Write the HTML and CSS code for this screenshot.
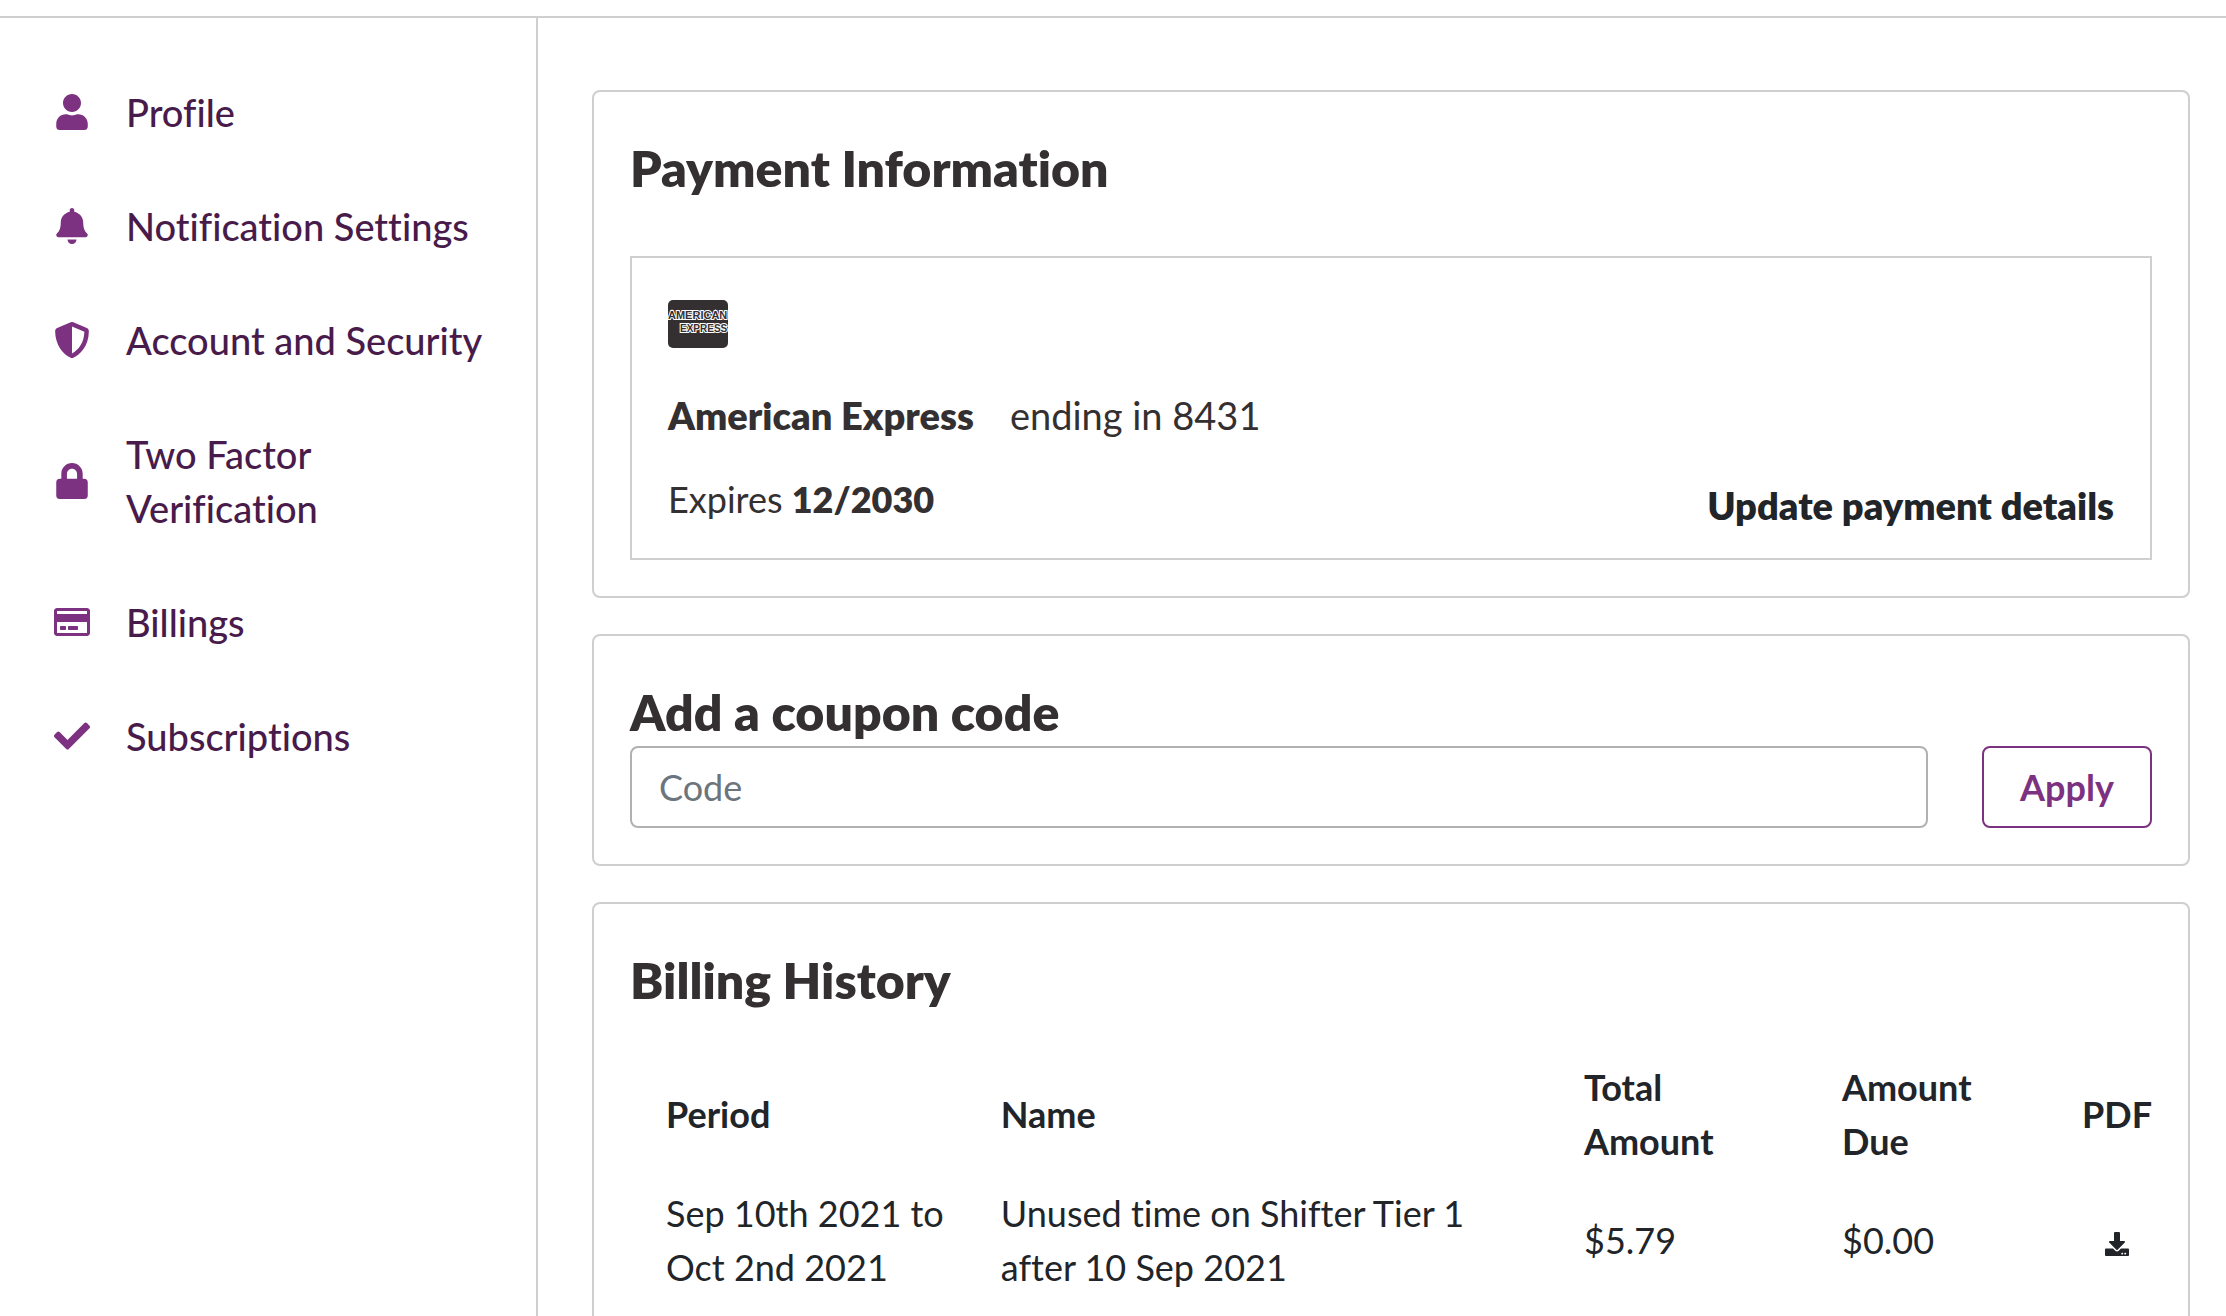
FILE: index.html
```html
<!DOCTYPE html>
<html lang="en">
<head>
<meta charset="utf-8">
<meta name="viewport" content="width=device-width, initial-scale=1">
<title>Billings</title>
<link rel="stylesheet" href="styles.css">
</head>
<body>
<header class="topbar"></header>
<div class="layout">
  <nav class="sidebar" aria-label="Account">
    <a class="nav-link" href="#profile">
      <svg class="nav-icon" viewBox="0 0 448 512" aria-hidden="true"><path d="M224 256c70.7 0 128-57.3 128-128S294.7 0 224 0 96 57.3 96 128s57.3 128 128 128zm89.6 32h-16.7c-22.2 10.2-46.9 16-72.9 16s-50.6-5.8-72.9-16h-16.7C60.2 288 0 348.2 0 422.4V464c0 26.5 21.5 48 48 48h352c26.5 0 48-21.5 48-48v-41.6c0-74.2-60.2-134.4-134.4-134.4z"/></svg>
      <span>Profile</span>
    </a>
    <a class="nav-link" href="#notifications">
      <svg class="nav-icon" viewBox="0 0 448 512" aria-hidden="true"><path d="M224 512c35.32 0 63.97-28.65 63.97-64H160.03c0 35.35 28.65 64 63.97 64zm215.39-149.71c-19.32-20.76-55.47-51.99-55.47-154.29 0-77.7-54.48-139.9-127.94-155.16V32c0-17.67-14.32-32-31.98-32s-31.98 14.33-31.98 32v20.84C118.56 68.1 64.08 130.3 64.08 208c0 102.3-36.15 133.53-55.47 154.29-6 6.45-8.66 14.16-8.61 21.71.11 16.4 12.98 32 32.1 32h383.8c19.12 0 32-15.6 32.1-32 .05-7.55-2.61-15.27-8.61-21.71z"/></svg>
      <span>Notification Settings</span>
    </a>
    <a class="nav-link" href="#security">
      <svg class="nav-icon" viewBox="0 0 512 512" aria-hidden="true"><path d="M466.5 83.7l-192-80a48.15 48.15 0 0 0-36.9 0l-192 80C27.7 91.1 16 108.6 16 128c0 198.5 114.5 335.7 221.5 380.3 11.8 4.9 25.1 4.9 36.9 0C360.1 472.6 496 349.3 496 128c0-19.4-11.7-36.9-29.5-44.3zM256.1 446.3l-.1-381 175.9 73.3c-3.3 151.4-82.1 261.1-175.8 307.7z"/></svg>
      <span>Account and Security</span>
    </a>
    <a class="nav-link" href="#two-factor">
      <svg class="nav-icon" viewBox="0 0 448 512" aria-hidden="true"><path d="M400 224h-24v-72C376 68.2 307.8 0 224 0S72 68.2 72 152v72H48c-26.5 0-48 21.5-48 48v192c0 26.5 21.5 48 48 48h352c26.5 0 48-21.5 48-48V272c0-26.5-21.5-48-48-48zm-104 0H152v-72c0-39.7 32.3-72 72-72s72 32.3 72 72v72z"/></svg>
      <span>Two Factor Verification</span>
    </a>
    <a class="nav-link" href="#billings" aria-current="page">
      <svg class="nav-icon" viewBox="0 0 576 512" aria-hidden="true"><path d="M527.9 32H48.1C21.5 32 0 53.5 0 80v352c0 26.5 21.5 48 48.1 48h479.8c26.6 0 48.1-21.5 48.1-48V80c0-26.5-21.5-48-48.1-48zM54.1 80h467.8c3.3 0 6 2.7 6 6v42H48.1V86c0-3.3 2.7-6 6-6zm467.8 352H54.1c-3.3 0-6-2.7-6-6V256h479.8v170c0 3.3-2.7 6-6 6zM192 332v40c0 6.6-5.4 12-12 12h-72c-6.6 0-12-5.4-12-12v-40c0-6.6 5.4-12 12-12h72c6.6 0 12 5.4 12 12zm192 0v40c0 6.6-5.4 12-12 12H236c-6.6 0-12-5.4-12-12v-40c0-6.6 5.4-12 12-12h136c6.6 0 12 5.4 12 12z"/></svg>
      <span>Billings</span>
    </a>
    <a class="nav-link" href="#subscriptions">
      <svg class="nav-icon" viewBox="0 0 512 512" aria-hidden="true"><path d="M173.898 439.404l-166.4-166.4c-9.997-9.997-9.997-26.206 0-36.204l36.203-36.204c9.997-9.998 26.207-9.998 36.204 0L192 312.69 432.095 72.596c9.997-9.997 26.207-9.997 36.204 0l36.203 36.204c9.997 9.997 9.997 26.206 0 36.204l-294.4 294.401c-9.998 9.997-26.207 9.997-36.204-.001z"/></svg>
      <span>Subscriptions</span>
    </a>
  </nav>

  <main class="content">
    <section class="card payment">
      <h2 class="card-title">Payment Information</h2>
      <div class="method">
        <svg class="card-brand" viewBox="0 0 60 54" role="img" aria-label="American Express card">
          <rect class="brand-plate" x="0" y="3" width="60" height="48" rx="5"/>
          <text class="brand-name" x="0" y="22" font-size="11">AMERICAN</text>
          <text class="brand-name" x="12" y="35" font-size="10">EXPRESS</text>
        </svg>
        <div class="method-row">
          <div class="method-info">
            <p class="method-line"><strong>American Express</strong><span>ending in 8431</span></p>
            <p>Expires <strong>12/2030</strong></p>
          </div>
          <button class="link-button" type="button">Update payment details</button>
        </div>
      </div>
    </section>

    <section class="card coupon">
      <h2 class="card-title"><label for="coupon-code">Add a coupon code</label></h2>
      <form class="coupon-form">
        <input class="coupon-input" id="coupon-code" type="text" placeholder="Code">
        <button class="apply-button" type="button">Apply</button>
      </form>
    </section>

    <section class="card history">
      <h2 class="card-title">Billing History</h2>
      <table class="history-table">
        <colgroup>
          <col class="col-period"><col class="col-name"><col class="col-total"><col class="col-due"><col class="col-pdf">
        </colgroup>
        <thead>
          <tr>
            <th scope="col">Period</th>
            <th scope="col">Name</th>
            <th scope="col">Total Amount</th>
            <th scope="col">Amount Due</th>
            <th scope="col" class="pdf">PDF</th>
          </tr>
        </thead>
        <tbody>
          <tr>
            <td>Sep 10th 2021 to Oct 2nd 2021</td>
            <td>Unused time on Shifter Tier 1 after 10 Sep 2021</td>
            <td>$5.79</td>
            <td>$0.00</td>
            <td class="pdf">
              <a class="download" href="#invoice" aria-label="Download PDF"><svg class="download-icon" viewBox="0 0 512 512" aria-hidden="true"><path d="M216 0h80c13.3 0 24 10.7 24 24v168h87.7c17.8 0 26.7 21.5 14.1 34.1L269.7 378.3c-7.5 7.5-19.8 7.5-27.3 0L90.1 226.1c-12.6-12.6-3.7-34.1 14.1-34.1H192V24c0-13.3 10.7-24 24-24zm296 376v112c0 13.3-10.7 24-24 24H24c-13.3 0-24-10.7-24-24V376c0-13.3 10.7-24 24-24h146.7l49 49c20.1 20.1 52.5 20.1 72.6 0l49-49H488c13.3 0 24 10.7 24 24zm-124 88c0-11-9-20-20-20s-20 9-20 20 9 20 20 20 20-9 20-20zm64 0c0-11-9-20-20-20s-20 9-20 20 9 20 20 20 20-9 20-20z"/></svg></a>
            </td>
          </tr>
        </tbody>
      </table>
    </section>
  </main>
</div>
</body>
</html>
```

FILE: styles.css
```css
:root {
  --ink: #343031;
  --ink-cool: #212529;
  --purple: #7c3280;
  --purple-dark: #481b4b;
  --line: #cfcfcf;
}

* { box-sizing: border-box; }

body {
  margin: 0;
  min-height: 100vh;
  display: flex;
  flex-direction: column;
  background: #fff;
  color: var(--ink-cool);
  font-family: Lato, "Open Sans", sans-serif;
  font-size: 36px;
  line-height: 54px;
  font-variant-ligatures: none;
}

p, h2 { margin: 0; }

button, input { font: inherit; }

.topbar {
  height: 18px;
  flex: none;
  border-bottom: 2px solid var(--line);
}

.layout {
  flex: 1;
  display: flex;
}

.sidebar {
  flex: 0 0 538px;
  display: flex;
  flex-direction: column;
  gap: 60px;
  padding: 67px 36px 60px 54px;
  border-right: 2px solid var(--line);
}

.nav-link {
  display: flex;
  align-items: center;
  gap: 36px;
  color: var(--purple-dark);
  font-size: 38px;
  font-weight: 500;
  text-decoration: none;
}

.nav-icon {
  flex: none;
  width: 36px;
  height: 36px;
  fill: var(--purple);
}

.content {
  flex: 1;
  min-width: 0;
  display: flex;
  flex-direction: column;
  gap: 36px;
  padding: 72px 36px 0 54px;
}

.card {
  padding: 46px 36px 36px;
  border: 2px solid var(--line);
  border-radius: 8px;
}

.card-title {
  color: var(--ink);
  font-size: 50px;
  font-weight: 800;
  line-height: 60px;
}

.payment .card-title { margin-bottom: 58px; }
.coupon .card-title { margin-bottom: 4px; }
.history .card-title { margin-bottom: 41px; }

.method {
  padding: 39px 36px 26px;
  border: 2px solid var(--line);
  color: var(--ink);
}

.card-brand {
  display: block;
  width: 60px;
  height: 54px;
  margin-bottom: 37px;
}

.brand-plate { fill: var(--ink); }

.brand-name {
  font-family: "Liberation Sans", sans-serif;
  font-weight: 700;
  fill: var(--ink);
  stroke: #fff;
  stroke-width: 2px;
  paint-order: stroke;
}

.method-row {
  display: flex;
  justify-content: space-between;
  align-items: flex-end;
}

.method-info {
  display: grid;
  gap: 30px;
  padding-bottom: 6px;
}

.method-info strong { font-weight: 800; }

.method-line {
  display: flex;
  gap: 36px;
  font-size: 38px;
}

.link-button {
  padding: 0;
  border: 0;
  background: none;
  color: var(--ink-cool);
  font-size: 38px;
  font-weight: 800;
  cursor: pointer;
}

.coupon-form {
  display: flex;
  gap: 54px;
}

.coupon-input {
  flex: 1;
  min-width: 0;
  padding: 12px 27px;
  border: 2px solid #b1b1b1;
  border-radius: 8px;
  color: var(--ink-cool);
}

.coupon-input::placeholder {
  color: #6c757d;
  opacity: 1;
}

.apply-button {
  min-width: 170px;
  padding: 12px 36px;
  border: 2px solid var(--purple);
  border-radius: 8px;
  background: #fff;
  color: var(--purple);
  font-weight: 700;
  cursor: pointer;
}

.history-table {
  width: 100%;
  table-layout: fixed;
  border-collapse: collapse;
}

/* the name column takes the width that the others leave */
.col-period { width: 22%; }
.col-total { width: 258px; }
.col-due { width: 240px; }
.col-pdf { width: 106px; }

.history-table th,
.history-table td {
  padding: 9px 18px 9px 36px;
  text-align: left;
  vertical-align: middle;
}

.history-table .pdf {
  padding-right: 0;
  text-align: center;
}

.download {
  display: flex;
  justify-content: center;
  padding-top: 8px;
}

.download-icon {
  width: 24px;
  height: 24px;
  fill: var(--ink-cool);
}
```
